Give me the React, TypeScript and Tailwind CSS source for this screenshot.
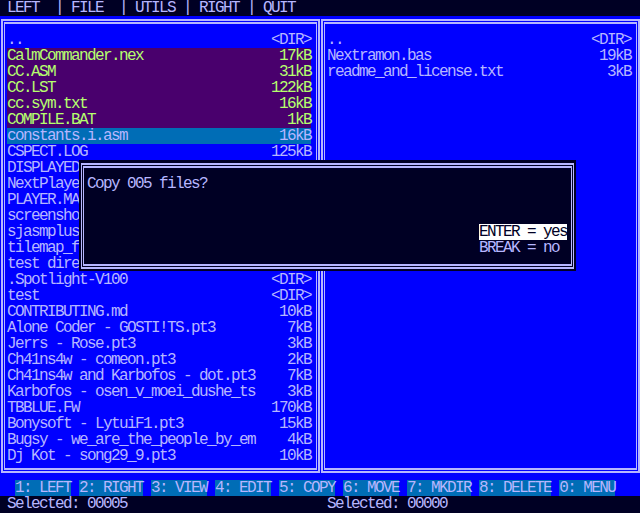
import React from "react";

type Entry = [string, string, string?];

const leftFiles: Entry[] = [
  ["..", "<DIR>"],
  ["CalmCommander.nex", "17kB", "s"],
  ["CC.ASM", "31kB", "s"],
  ["CC.LST", "122kB", "s"],
  ["cc.sym.txt", "16kB", "s"],
  ["COMPILE.BAT", "1kB", "s"],
  ["constants.i.asm", "16kB", "c"],
  ["CSPECT.LOG", "125kB"],
  ["DISPLAYED", ""],
  ["NextPlaye", ""],
  ["PLAYER.MA", ""],
  ["screensho", ""],
  ["sjasmplus", ""],
  ["tilemap_f", ""],
  ["test dire", ""],
  [".Spotlight-V100", "<DIR>"],
  ["test", "<DIR>"],
  ["CONTRIBUTING.md", "10kB"],
  ["Alone Coder - GOSTI!TS.pt3", "7kB"],
  ["Jerrs - Rose.pt3", "3kB"],
  ["Ch41ns4w - comeon.pt3", "2kB"],
  ["Ch41ns4w and Karbofos - dot.pt3", "7kB"],
  ["Karbofos - osen_v_moei_dushe_ts", "3kB"],
  ["TBBLUE.FW", "170kB"],
  ["Bonysoft - LytuiF1.pt3", "15kB"],
  ["Bugsy - we_are_the_people_by_em", "4kB"],
  ["Dj Kot - song29_9.pt3", "10kB"],
];

const rightFiles: Entry[] = [
  ["..", "<DIR>"],
  ["Nextramon.bas", "19kB"],
  ["readme_and_license.txt", "3kB"],
];

function T({ children }: { children: React.ReactNode }) {
  return <span className="inline-block h-4 whitespace-pre">{children}</span>;
}

function Row({ e }: { e: Entry }) {
  const kind = e[2];
  const cls =
    kind === "s"
      ? "bg-[#49006d] text-[#b6ff6d]"
      : kind === "c"
      ? "bg-[#006db6] text-[#b6b6ff]"
      : "text-[#b6b6ff]";
  return (
    <div className={`h-4 w-[304px] flex justify-between ${cls}`}>
      <T>{e[0]}</T>
      {e[1] ? <T>{e[1]}</T> : null}
    </div>
  );
}

function Panel({ files }: { files: Entry[] }) {
  return (
    <div className="w-[320px] h-[464px] pt-[3px] pb-[7px] pl-[1px] flex flex-col">
      <div className="flex-1 border-2 border-[#b6b6ff] p-[1px] flex flex-col">
        <div className="flex-1 border-y-2 border-x border-[#b6b6ff] pt-[8px] pl-[2px] flex flex-col">
          {files.map((f, i) => (
            <Row key={i} e={f} />
          ))}
        </div>
      </div>
    </div>
  );
}

const keys = [
  "1: LEFT",
  "2: RIGHT",
  "3: VIEW",
  "4: EDIT",
  "5: COPY",
  "6: MOVE",
  "7: MKDIR",
  "8: DELETE",
  "0: MENU",
];

export default function App() {
  return (
    <div className="relative w-[640px] h-[513px] overflow-hidden bg-[#0000ff] font-['Liberation_Mono',monospace] text-[16px] tracking-[-1.6px] leading-4 text-[#b6b6ff]">
      {/* menu bar */}
      <div className="h-4 bg-[#000024] pl-[7px] flex">
        <T>{"LEFT  | FILE  | UTILS | RIGHT | QUIT"}</T>
      </div>

      {/* panels */}
      <div className="flex">
        <Panel files={leftFiles} />
        <Panel files={rightFiles} />
      </div>

      {/* function keys */}
      <div className="h-4 flex gap-2 pl-[15px]">
        {keys.map((k) => (
          <div key={k} className="bg-[#006db6] h-4">
            <T>{k}</T>
          </div>
        ))}
      </div>

      {/* status */}
      <div className="h-[17px] bg-[#000024] flex">
        <div className="w-[320px] pl-[7px]">
          <T>Selected: 00005</T>
        </div>
        <div className="pl-[7px]">
          <T>Selected: 00000</T>
        </div>
      </div>

      {/* dialog */}
      <div className="absolute left-[79px] top-[160px] w-[497px] h-[111px] bg-[#000024] pt-[3px] px-[2px] pb-[2px] flex flex-col">
        <div className="flex-1 border-y-2 border-x border-[#b6b6ff] p-[1px] flex flex-col">
          <div className="flex-1 border-y-2 border-x border-[#b6b6ff] pt-[8px] pl-[3px] flex flex-col">
            <div className="h-4">
              <T>Copy 005 files?</T>
            </div>
            <div className="h-4" />
            <div className="h-4" />
            <div className="h-4 pl-[392px] flex">
              <div className="bg-white text-[#000024] h-4">
                <T>ENTER = yes</T>
              </div>
            </div>
            <div className="h-4 pl-[392px] flex">
              <T>BREAK = no</T>
            </div>
          </div>
        </div>
      </div>
    </div>
  );
}
